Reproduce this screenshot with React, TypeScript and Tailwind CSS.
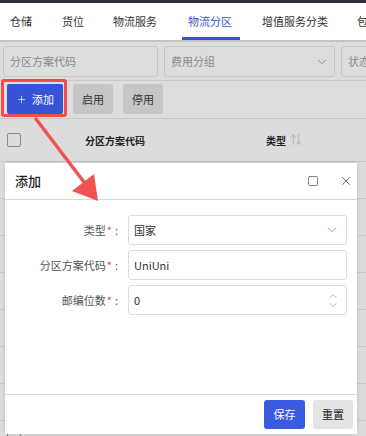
import { ChevronDown, ChevronUp, Plus, X, Square } from "lucide-react";

const tabs = ["仓储", "货位", "物流服务", "物流分区", "增值服务分类", "包"];
const tabLeft = ["ml-[10px]", "ml-[30px]", "ml-[29px]", "ml-[31px]", "ml-[30px]", "ml-[29px]"];

function FormRow({ label, children }: { label: string; children: React.ReactNode }) {
  return (
    <div className="flex items-center h-[30px]">
      <div className="w-[113px] text-right text-[11px] text-[#555]">
        {label}
        <span className="text-[#f04848] ml-[1px]">*</span>
        <span className="ml-[3px]">:</span>
      </div>
      <div className="ml-[10px] w-[219px] h-[30px] border border-[#dcdcdc] rounded-[3px] flex items-center pl-[5px] pr-[7px] text-[11px] text-[#333]">
        {children}
      </div>
    </div>
  );
}

export default function App() {
  return (
    <div
      className="relative w-[366px] h-[436px] overflow-hidden bg-[#dddddd]"
      style={{ fontFamily: '"Noto Sans CJK SC", "Noto Sans", sans-serif' }}
    >
      <div className="h-[3px] bg-[#2c2f38]" />
      {/* tabs */}
      <div className="relative h-[37px] bg-white flex items-center text-[11px] text-[#333] whitespace-nowrap">
        {tabs.map((t, i) => (
          <span key={t} className={`${tabLeft[i]} shrink-0 ${i === 3 ? "text-[#3553d4]" : ""}`}>
            {t}
          </span>
        ))}
        <div className="absolute left-[182px] bottom-0 w-[58px] h-[3px] bg-[#3553d4]" />
      </div>
      <div className="h-[2px] bg-[#c4c4c4]" />

      {/* filter row */}
      <div className="flex gap-[6px] px-[3px] pt-[4px] h-[39px] border-b border-[#c8c8c8] text-[11px] text-[#8a8a8a] whitespace-nowrap">
        <div className="w-[155px] shrink-0 h-[31px] border border-[#c6c6c6] rounded-[3px] flex items-center px-[6px]">分区方案代码</div>
        <div className="w-[171px] shrink-0 h-[31px] border border-[#c6c6c6] rounded-[3px] flex items-center justify-between pl-[6px] pr-[5px]">
          <span>费用分组</span>
          <ChevronDown className="w-[14px] h-[14px] text-[#888]" strokeWidth={1.5} />
        </div>
        <div className="w-[80px] shrink-0 h-[31px] border border-[#c6c6c6] rounded-[3px] flex items-center px-[6px]">状态</div>
      </div>

      {/* buttons */}
      <div className="flex gap-[10px] pl-[7px] pt-[3px] h-[38px] border-b border-[#c8c8c8] text-[11px] text-[#333]">
        <div className="w-[56px] h-[30px] bg-[#3553d4] text-white flex items-center justify-center gap-[5px] rounded-[2px]">
          <Plus className="w-[11px] h-[11px]" strokeWidth={1.5} />
          <span>添加</span>
        </div>
        <div className="w-[40px] h-[30px] bg-[#c6c6c6] rounded-[3px] flex items-center justify-center">启用</div>
        <div className="w-[40px] h-[30px] bg-[#c6c6c6] rounded-[3px] flex items-center justify-center">停用</div>
      </div>

      {/* table header */}
      <div className="relative flex items-center h-[43px] border-b border-[#c8c8c8] bg-[#dcdcdc] text-[10px] font-bold text-[#222]">
        <div className="ml-[7px] w-[14px] h-[14px] border border-[#8a8a8a] rounded-[2px]" />
        <span className="ml-[64px]">分区方案代码</span>
        <span className="ml-[121px]">类型</span>
        <span className="ml-[4px] text-[#b0b0b0] font-normal text-[12px]">⇅</span>
      </div>
      {[0, 1, 2, 3, 4, 5, 6].map((r) => (
        <div key={r} className="h-[37px] border-b border-[#c8c8c8]" />
      ))}
      <div className="absolute left-[7px] top-[432px] w-[14px] h-[14px] border border-[#8a8a8a] rounded-[2px]" />

      {/* dialog */}
      <div className="absolute left-[5px] top-[163px] w-[352px] h-[271px] bg-white flex flex-col shadow-[0_0_4px_rgba(0,0,0,0.15)]">
        <div className="h-[37px] flex items-center border-b border-[#d8d8d8] pl-[10px] pr-[4px]">
          <span className="text-[13px] text-[#222] font-medium">添加</span>
          <Square className="ml-auto w-[12px] h-[12px] text-[#555]" strokeWidth={1.5} />
          <X className="ml-[20px] w-[14px] h-[14px] text-[#555]" strokeWidth={1.5} />
        </div>
        <div className="flex-1 flex flex-col gap-[5px] pt-[15px]">
          <FormRow label="类型">
            <span>国家</span>
            <ChevronDown className="ml-auto w-[14px] h-[14px] text-[#888]" strokeWidth={1.5} />
          </FormRow>
          <FormRow label="分区方案代码">
            <span>UniUni</span>
          </FormRow>
          <FormRow label="邮编位数">
            <span>0</span>
            <div className="ml-auto flex flex-col -space-y-[3px]">
              <ChevronUp className="w-[12px] h-[12px] text-[#999]" strokeWidth={1.5} />
              <ChevronDown className="w-[12px] h-[12px] text-[#999]" strokeWidth={1.5} />
            </div>
          </FormRow>
        </div>
        <div className="h-[40px] border-t border-[#d8d8d8] flex items-center justify-end gap-[8px] pr-[4px] text-[11px]">
          <div className="w-[41px] h-[29px] bg-[#3a5ae0] text-white rounded-[3px] flex items-center justify-center">保存</div>
          <div className="w-[40px] h-[29px] bg-[#e4e4e4] text-[#222] rounded-[3px] flex items-center justify-center">重置</div>
        </div>
      </div>

      {/* annotation */}
      <div className="absolute left-[1px] top-[79px] w-[66px] h-[38px] border-[3px] border-[#f24c4c] rounded-[3px]" />
      <svg className="absolute left-0 top-0" width="366" height="436">
        <line x1="36" y1="119" x2="87" y2="186" stroke="#f25252" strokeWidth="3.5" strokeLinecap="round" />
        <polygon points="98,201 72,191 94,174" fill="#f25252" />
      </svg>
    </div>
  );
}
